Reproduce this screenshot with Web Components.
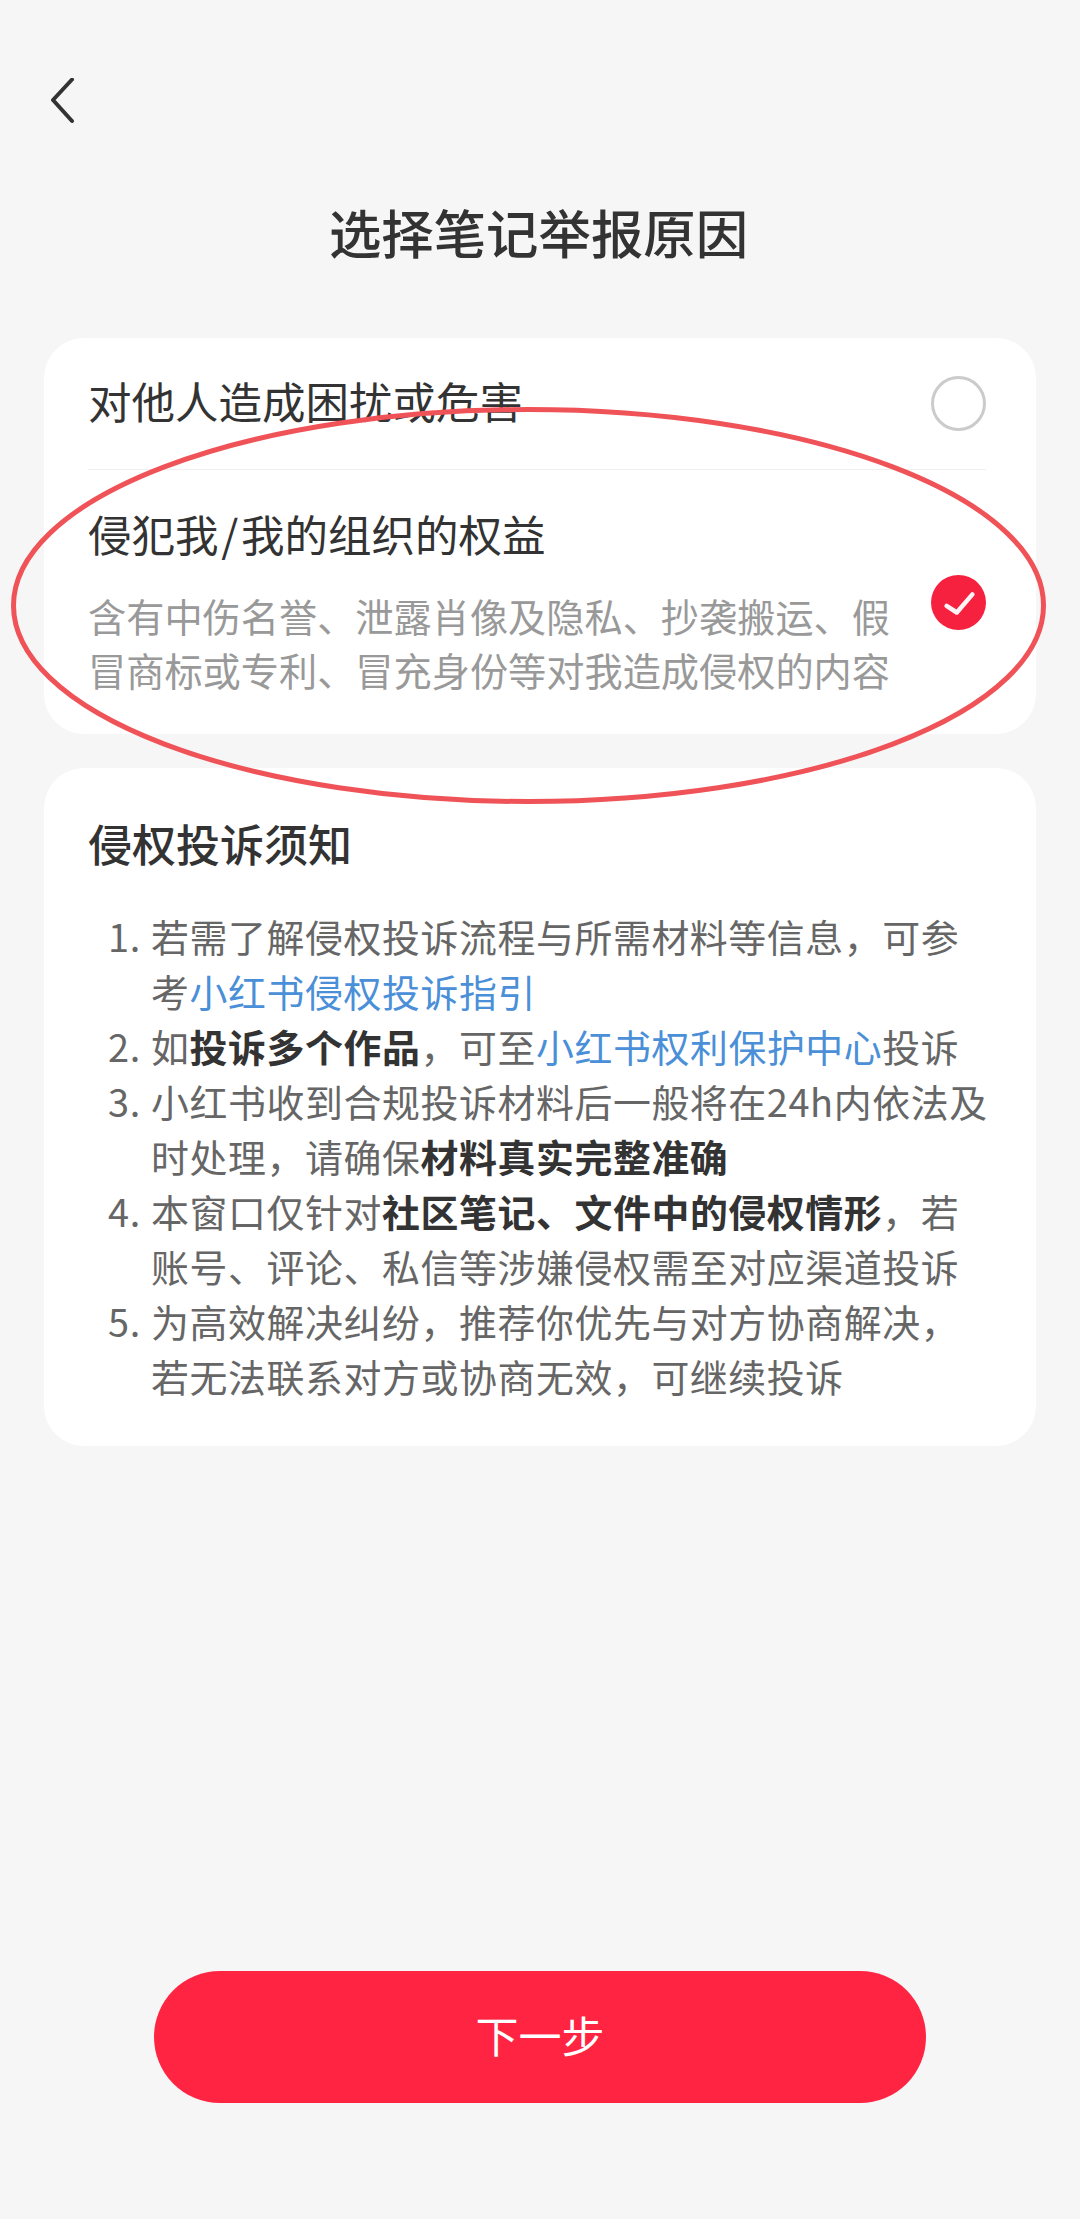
<!DOCTYPE html>
<html lang="zh">
<head>
<meta charset="utf-8">
<title>选择笔记举报原因</title>
<style>
    html, body {
        margin: 0;
        padding: 0;
        background: #f6f6f7;
    }
    body {
        font-family: "Noto Sans CJK SC", "Noto Sans", sans-serif;
    }
</style>
</head>
<body>
<x-report-page>
    <x-back-button slot="nav"></x-back-button>
    <span slot="title">选择笔记举报原因</span>

    <x-card>
        <x-reason label="对他人造成困扰或危害"></x-reason>
        <x-reason label="侵犯我&#8202;/&#8202;我的组织的权益" checked divided>
            含有中伤名誉、泄露肖像及隐私、抄袭搬运、假冒商标或专利、冒充身份等对我造成侵权的内容
        </x-reason>
    </x-card>

    <x-card>
        <x-notice heading="侵权投诉须知">
            <x-notice-item num="1.">若需了解侵权投诉流程与所需材料等信息，可参<br>考<a>小红书侵权投诉指引</a></x-notice-item>
            <x-notice-item num="2.">如<b>投诉多个作品</b>，可至<a>小红书权利保护中心</a>投诉</x-notice-item>
            <x-notice-item num="3.">小红书收到合规投诉材料后一般将在24h内依法及<br>时处理，请确保<b>材料真实完整准确</b></x-notice-item>
            <x-notice-item num="4.">本窗口仅针对<b>社区笔记、文件中的侵权情形</b>，若<br>账号、评论、私信等涉嫌侵权需至对应渠道投诉</x-notice-item>
            <x-notice-item num="5.">为高效解决纠纷，推荐你优先与对方协商解决，<br>若无法联系对方或协商无效，可继续投诉</x-notice-item>
        </x-notice>
    </x-card>

    <x-next-button slot="footer">下一步</x-next-button>
    <x-annotation slot="overlay"></x-annotation>
</x-report-page>

<script>
class ReportPage extends HTMLElement {
    constructor() {
        super();
        this.attachShadow({ mode: 'open' });
        this.shadowRoot.innerHTML = `
            <style>
                :host {
                    display: flex;
                    flex-direction: column;
                    position: relative;
                    box-sizing: border-box;
                    height: 2219px;
                    padding: 78px 44px 116px;
                    overflow: hidden;
                    color: #333;
                }
                h1 {
                    margin: 72px 0 72px;
                    padding-right: 3px;
                    font-size: 52.4px;
                    line-height: 70px;
                    font-weight: 500;
                    text-align: center;
                    color: #333;
                }
                #cards {
                    display: flex;
                    flex-direction: column;
                    gap: 34px;
                }
                footer {
                    margin-top: auto;
                    display: flex;
                    justify-content: center;
                }
            </style>
            <nav><slot name="nav"></slot></nav>
            <h1><slot name="title"></slot></h1>
            <div id="cards"><slot></slot></div>
            <footer><slot name="footer"></slot></footer>
            <slot name="overlay"></slot>
        `;
    }
}

class BackButton extends HTMLElement {
    constructor() {
        super();
        this.attachShadow({ mode: 'open' });
        this.shadowRoot.innerHTML = `
            <style>
                :host {
                    display: block;
                    width: 45px;
                    height: 46px;
                    margin-left: 6px;
                }
                svg {
                    display: block;
                }
            </style>
            <svg width="26" height="46" viewBox="0 0 26 46" fill="none">
                <path d="M22 1.5 L3 22 L22 43" stroke="#333" stroke-width="4" stroke-linecap="round" stroke-linejoin="round"/>
            </svg>
        `;
    }
}

class Card extends HTMLElement {
    constructor() {
        super();
        this.attachShadow({ mode: 'open' });
        this.shadowRoot.innerHTML = `
            <style>
                :host {
                    display: block;
                    background: #fff;
                    border-radius: 40px;
                    padding: 0 45px 0 44px;
                }
            </style>
            <slot></slot>
        `;
    }
}

class Reason extends HTMLElement {
    constructor() {
        super();
        this.attachShadow({ mode: 'open' });
        const checked = this.hasAttribute('checked');
        const mark = checked
            ? `<svg width="55" height="55" viewBox="0 0 55 55">
                   <circle cx="27.5" cy="27.5" r="27.5" fill="#f5213f"/>
                   <path d="M15.6 30.9 L25.8 37.5 L41.4 19.4" fill="none" stroke="#fff" stroke-width="4.5" stroke-linecap="round" stroke-linejoin="round" opacity="0.95"/>
               </svg>`
            : `<svg width="55" height="55" viewBox="0 0 55 55">
                   <circle cx="27.5" cy="27.5" r="26" fill="none" stroke="#cbcbcb" stroke-width="3"/>
               </svg>`;
        this.shadowRoot.innerHTML = `
            <style>
                :host {
                    display: flex;
                    align-items: center;
                    justify-content: space-between;
                    box-sizing: border-box;
                    min-height: 131px;
                    margin-right: 5px;
                }
                :host([divided]) {
                    border-top: 1px solid #efefef;
                    padding: 34px 0 37px;
                }
                :host(:not([divided])) #text {
                    padding-bottom: 6px;
                }
                #label {
                    font-size: 43.5px;
                    line-height: 60px;
                    color: #333;
                }
                #desc {
                    width: 810px;
                    font-size: 38.2px;
                    line-height: 54px;
                    color: #999;
                }
                :host([divided]) #desc {
                    margin-top: 25px;
                }
                :host([divided]) svg {
                    margin-top: 3px;
                }
                svg {
                    display: block;
                    flex: none;
                }
            </style>
            <div id="text">
                <div id="label">${this.getAttribute('label')}</div>
                <div id="desc"><slot></slot></div>
            </div>
            ${mark}
        `;
    }
}

class Notice extends HTMLElement {
    constructor() {
        super();
        this.attachShadow({ mode: 'open' });
        this.shadowRoot.innerHTML = `
            <style>
                :host {
                    display: block;
                    padding: 45px 0 43px;
                }
                h2 {
                    margin: 0 0 35px;
                    font-size: 44px;
                    line-height: 60px;
                    font-weight: 500;
                    color: #333;
                }
            </style>
            <h2>${this.getAttribute('heading')}</h2>
            <slot></slot>
        `;
    }
}

class NoticeItem extends HTMLElement {
    constructor() {
        super();
        this.attachShadow({ mode: 'open' });
        this.shadowRoot.innerHTML = `
            <style>
                :host {
                    display: flex;
                    padding-left: 20px;
                    font-size: 37.9px;
                    letter-spacing: 0.6px;
                    line-height: 55px;
                    color: #666;
                }
                #num {
                    flex: none;
                    width: 43px;
                }
                ::slotted(b) {
                    font-weight: 700;
                    color: #333;
                }
                ::slotted(a) {
                    color: #4a8fd8;
                }
            </style>
            <span id="num">${this.getAttribute('num')}</span>
            <div><slot></slot></div>
        `;
    }
}

class NextButton extends HTMLElement {
    constructor() {
        super();
        this.attachShadow({ mode: 'open' });
        this.shadowRoot.innerHTML = `
            <style>
                :host {
                    display: flex;
                    align-items: center;
                    justify-content: center;
                    box-sizing: border-box;
                    width: 772px;
                    height: 132px;
                    padding-bottom: 6px;
                    border-radius: 66px;
                    background: #ff2442;
                    color: #fff;
                    font-size: 43px;
                }
            </style>
            <slot></slot>
        `;
    }
}

// hand drawn red ring that lies over the second reason
class Annotation extends HTMLElement {
    constructor() {
        super();
        this.attachShadow({ mode: 'open' });
        this.shadowRoot.innerHTML = `
            <style>
                :host {
                    position: absolute;
                    left: 0;
                    top: 0;
                    pointer-events: none;
                }
                svg {
                    display: block;
                }
            </style>
            <svg width="1080" height="820" viewBox="0 0 1080 820" fill="none">
                <ellipse cx="528.5" cy="605.5" rx="515" ry="196" stroke="#ef5358" stroke-width="5"/>
            </svg>
        `;
    }
}

customElements.define('x-report-page', ReportPage);
customElements.define('x-back-button', BackButton);
customElements.define('x-card', Card);
customElements.define('x-reason', Reason);
customElements.define('x-notice', Notice);
customElements.define('x-notice-item', NoticeItem);
customElements.define('x-next-button', NextButton);
customElements.define('x-annotation', Annotation);
</script>
</body>
</html>
